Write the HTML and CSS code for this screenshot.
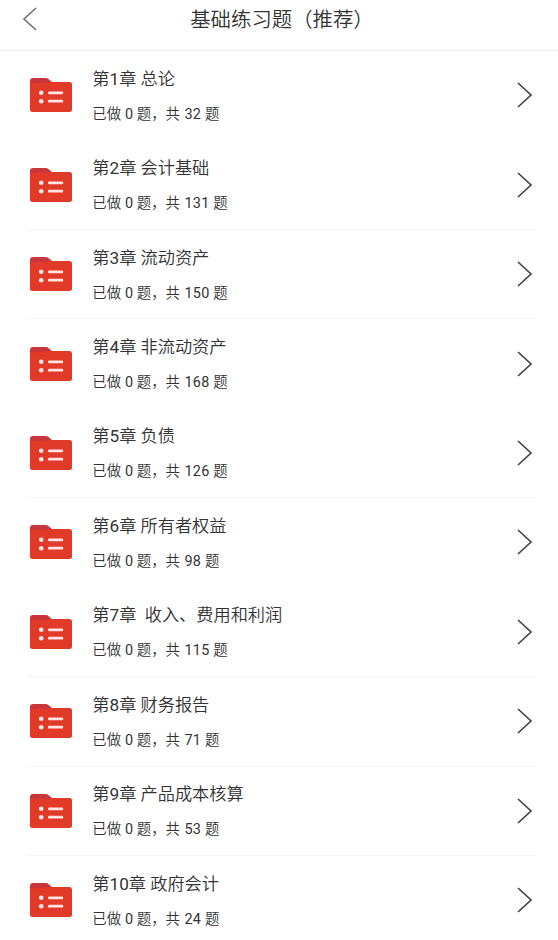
FILE: index.html
```html
<!DOCTYPE html>
<html lang="zh-CN">
<head>
<meta charset="utf-8">
<title>基础练习题（推荐）</title>
<link rel="stylesheet" href="styles.css">
</head>
<body>
<header class="header">
<svg class="back" viewBox="0 0 16 26"><path d="M14 2 2 13 14 24"/></svg>
<h1>基础练习题（推荐）</h1>
</header>
<main class="list" id="list"></main>
<script src="app.js"></script>
</body>
</html>
```
FILE: styles.css
```css
* { box-sizing: border-box; }
body {
  margin: 0;
  height: 940px;
  overflow: hidden;
  background: #fff;
  color: #333;
  font-family: Roboto, "Noto Sans CJK SC", sans-serif;
  font-weight: 350;
}
.header {
  display: grid;
  grid-template-columns: 44px 1fr 38px;
  align-items: center;
  height: 51px;
  padding-bottom: 12px;
  border-bottom: 1px solid #eee;
}
.back { width: 16px; height: 26px; margin: -1px 0 0 22px; fill: none; stroke: #707070; stroke-width: 1.6; }
h1 { margin: 1px 0 0; text-align: center; font-size: 20.4px; font-weight: inherit; line-height: 30px; }
.row {
  display: flex;
  align-items: center;
  height: 89.45px;
  padding: 0 24px 1px 29px;
}
.folder { width: 44px; height: 36px; margin-right: 19.3px; }
.text { flex: 1; }
.title { font-size: 17.2px; line-height: 26px; white-space: pre; }
.meta { margin-top: 13px; font-size: 14.4px; line-height: 20px; word-spacing: .3px; }
.num { font-weight: 400; }
.count { margin-left: .6px; letter-spacing: .3px; }
.arrow { width: 18px; height: 28px; fill: none; stroke: #444; stroke-width: 1.7; }
.divider { height: 1px; margin: -1px 22px 0 28px; background: #f3f3f3; }
```
FILE: app.js
```js
const chapters = [
  ["第1章 总论", 32, false], ["第2章 会计基础", 131, true],
  ["第3章 流动资产", 150, true], ["第4章 非流动资产", 168, false],
  ["第5章 负债", 126, true], ["第6章 所有者权益", 98, false],
  ["第7章  收入、费用和利润", 115, true], ["第8章 财务报告", 71, true],
  ["第9章 产品成本核算", 53, true], ["第10章 政府会计", 24, false]
];
const markNumber = text => text.replace(/\d+/, '<span class="num">$&</span>');
document.getElementById("list").innerHTML = chapters.map(([title, total, line]) => `
<section class="row">
  <svg class="folder" viewBox="0 0 44 36">
    <path fill="#c9353a" d="M1 4Q1 1 4 1H17Q19 1 20.5 3L23 5V14H1Z"/>
    <path fill="#e13a29" d="M1 6Q12 6.5 21 5H40.5Q43 5 43 7.5V32.5Q43 35 40.5 35H3.5Q1 35 1 32.5Z"/>
    <g fill="#ffe4df"><circle cx="12.2" cy="15.8" r="2.3"/><circle cx="12.2" cy="24.2" r="2.3"/>
    <rect x="19" y="14.4" width="15.2" height="2.8" rx="1.2"/><rect x="19" y="22.8" width="15.2" height="2.8" rx="1.2"/></g>
  </svg>
  <div class="text"><div class="title">${markNumber(title)}</div><div class="meta">已做 <span class="num">0</span> 题，共 <span class="num count">${total}</span> 题</div></div>
  <svg class="arrow" viewBox="0 0 18 28"><path d="M2 2 15 14 2 26"/></svg>
</section>${line ? '<div class="divider"></div>' : ""}`).join("");
```
